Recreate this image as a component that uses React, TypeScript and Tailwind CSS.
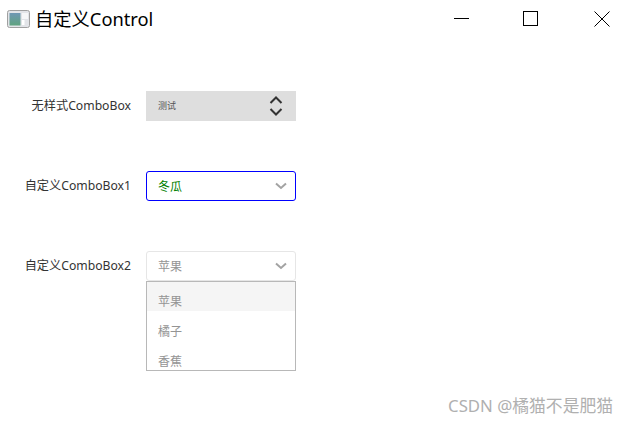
import React from "react";

const font = "font-['Noto_Sans','Noto_Sans_CJK_SC',sans-serif]";

const Chevron = ({ className = "" }: { className?: string }) => (
  <svg width="12" height="8" viewBox="0 0 12 8" className={className}>
    <path d="M1 1.5 L6 6 L11 1.5" fill="none" stroke="#a3a3a3" strokeWidth="2" />
  </svg>
);

const Row = ({ label, children }: { label: string; children: React.ReactNode }) => (
  <div className="flex items-center h-[30px]">
    <div className="w-[131px] text-right text-[12.2px] text-[#333333] whitespace-nowrap">{label}</div>
    <div className="relative ml-[15px] w-[150px] h-[30px]">{children}</div>
  </div>
);

export default function App() {
  return (
    <div className={`${font} relative w-[628px] h-[424px] bg-white overflow-hidden`}>
      {/* title bar */}
      <div className="flex items-center h-[38px] pl-[7px]">
        <svg width="23" height="18" viewBox="0 0 23 18">
          <defs>
            <linearGradient id="appIcon" x1="0" y1="0" x2="0" y2="1">
              <stop offset="0" stopColor="#6f97b4" />
              <stop offset="1" stopColor="#5fa37f" />
            </linearGradient>
          </defs>
          <rect x="0.5" y="0.5" width="22" height="17" rx="2" fill="#e2e4e8" stroke="#a0a0a0" />
          <rect x="2.5" y="3" width="11" height="12.5" fill="url(#appIcon)" />
          <rect x="15" y="3" width="6" height="6" fill="#f6f7f8" />
          <rect x="15" y="10" width="2.5" height="5" fill="#ffffff" />
        </svg>
        <div className="ml-[5px] text-[18.3px] leading-none text-black">自定义Control</div>
        <div className="ml-auto flex items-center">
          <svg width="16" height="16" viewBox="0 0 16 16" className="mr-[53px]">
            <path d="M0 7.5 H15" stroke="#000" strokeWidth="1" />
          </svg>
          <svg width="16" height="16" viewBox="0 0 16 16" className="mr-[55px]">
            <rect x="0.5" y="0.5" width="14" height="14" fill="none" stroke="#000" />
          </svg>
          <svg width="16" height="16" viewBox="0 0 16 16" className="mr-[18px]">
            <path d="M0.5 0.5 L15.5 15.5 M15.5 0.5 L0.5 15.5" stroke="#000" strokeWidth="1" />
          </svg>
        </div>
      </div>

      <div className="flex flex-col gap-[50px] pt-[53px]">
        <Row label="无样式ComboBox">
          <div className="flex items-center justify-between h-full bg-[#dedede] pl-[12px] pr-[13px]">
            <span className="text-[9px] text-[#555555]">测试</span>
            <svg width="14" height="22" viewBox="0 0 14 22">
              <path d="M1.5 8 L7 2.5 L12.5 8 M1.5 14 L7 19.5 L12.5 14" fill="none" stroke="#333333" strokeWidth="2" />
            </svg>
          </div>
        </Row>
        <Row label="自定义ComboBox1">
          <div className="flex items-center justify-between h-full bg-white border border-[#0000ff] rounded-[3px] pl-[11px] pr-[8px]">
            <span className="text-[12px] text-[#008000] pt-[1px]">冬瓜</span>
            <Chevron />
          </div>
        </Row>
        <Row label="自定义ComboBox2">
          <div className="flex items-center justify-between h-full bg-white border border-[#e6e6e6] rounded-[3px] pl-[11px] pr-[8px]">
            <span className="text-[12px] text-[#949494] pt-[1px]">苹果</span>
            <Chevron />
          </div>
          <div className="absolute left-0 top-[30px] w-[150px] h-[90px] bg-white border border-[#b8b8b8] overflow-hidden text-[12px] leading-[20px] text-[#949494]">
            <div className="h-[29px] pt-[10px] pl-[11px] bg-[#f5f5f5]">苹果</div>
            <div className="h-[30px] pt-[11px] pl-[11px]">橘子</div>
            <div className="h-[30px] pt-[11px] pl-[11px]">香蕉</div>
          </div>
        </Row>
      </div>

      <div className="absolute right-[15px] top-[396px] text-[16.8px] leading-[20px] text-[#b0b0b0] whitespace-nowrap">
        CSDN @橘猫不是肥猫
      </div>
    </div>
  );
}
